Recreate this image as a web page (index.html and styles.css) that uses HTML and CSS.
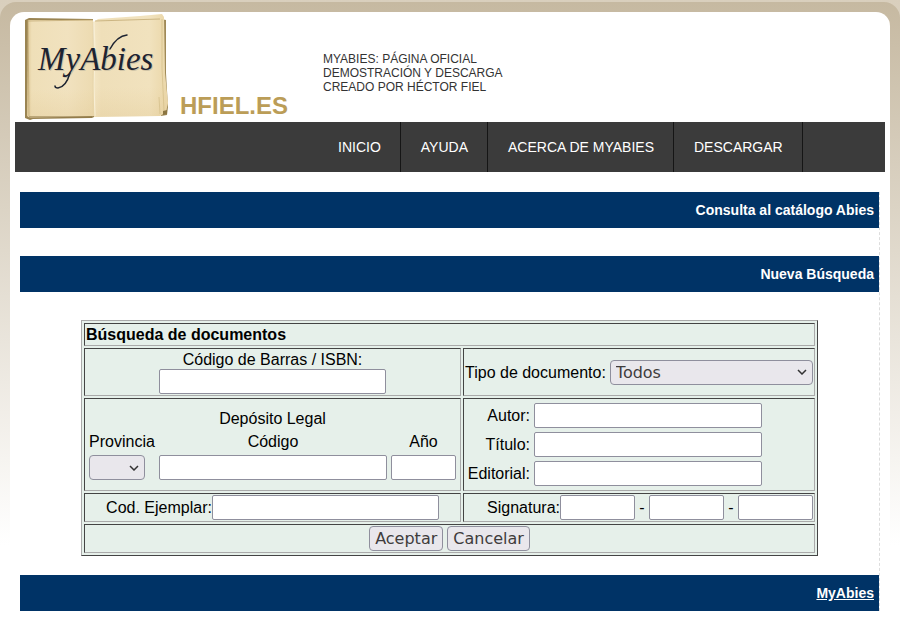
FILE: index.html
```html
<!DOCTYPE html>
<html lang="es">
<head>
<meta charset="utf-8">
<meta name="viewport" content="width=device-width, initial-scale=1">
<title>MyAbies</title>
<link rel="stylesheet" href="styles.css">
</head>
<body>
<div class="frame">
  <div class="page">
    <header class="header">
      <svg class="logo" viewBox="0 0 146 108" role="img" aria-label="MyAbies">
        <defs>
          <linearGradient id="paper-left" x1="0" x2="1" y1="0" y2="0">
            <stop offset="0" stop-color="#dcc694"/>
            <stop offset="0.07" stop-color="#efdfb8"/>
            <stop offset="0.6" stop-color="#f1e2bf"/>
            <stop offset="1" stop-color="#ecdab0"/>
          </linearGradient>
          <linearGradient id="paper-right" x1="0" x2="1" y1="0" y2="0">
            <stop offset="0" stop-color="#f3e5c3"/>
            <stop offset="0.1" stop-color="#efdfb9"/>
            <stop offset="0.75" stop-color="#f1e2be"/>
            <stop offset="1" stop-color="#ead6a7"/>
          </linearGradient>
          <linearGradient id="foot" x1="0" x2="0" y1="0" y2="1">
            <stop offset="0.7" stop-color="#e2c78d" stop-opacity="0"/>
            <stop offset="1" stop-color="#dcc088" stop-opacity="0.25"/>
          </linearGradient>
        </defs>
        <path d="M1 8 L5 6 L69 7 L70 105 L68 106 L9 107 L6 108 L1 106 Z" fill="#9a8452"/>
        <path d="M137 7 L142 8 L142 61 L144 95 L143 103 L137 104 Z" fill="#a08a58"/>
        <path d="M70 10 L74 7 L116 4 L138 2 L140 5 L141 61 L144 91 L142 100 L136 104 L70 105 Z" fill="url(#paper-right)"/>
        <path d="M4 8 L69 8 L71 104 L6 106 L3 104 Z" fill="url(#paper-left)"/>
        <path d="M4 8 L69 8 L71 104 L6 106 Z" fill="url(#foot)"/>
        <path d="M70 10 L138 3 L143 100 L136 104 L70 105 Z" fill="url(#foot)"/>
        <path d="M70 9 L71 39 L70 73 L71 104" fill="none" stroke="#f8eed4" stroke-width="1.2"/>
        <path d="M69 10 L69 41 L69 103" fill="none" stroke="#e6d4a8" stroke-width="0.8"/>
        <path d="M4 8 L5 104 M4 9 L69 8 M71 9 L136 7" fill="none" stroke="#c2aa74" stroke-width="0.8"/>
        <path d="M138 7 L138 56 L140 99 M135 85 L136 102" fill="none" stroke="#d6c08c" stroke-width="0.8"/>
        <path d="M5 105 L68 105" stroke="#8b7444" stroke-width="1"/>
        <path d="M139 99 L143 98 L143 102 L139 103 Z" fill="#8a7441"/>
        <text class="logo-shadow" x="15" y="59">MyAbies</text>
        <text class="logo-text" x="14" y="58">MyAbies</text>
        <path class="swash" d="M46 61 Q42 75 34 76 Q31 76 31 74"/>
        <path class="swash" d="M86 37 Q93 24 103 23"/>
      </svg>
      <div class="site">HFIEL.ES</div>
      <p class="tagline">MYABIES: PÁGINA OFICIAL<br>DEMOSTRACIÓN Y DESCARGA<br>CREADO POR HÉCTOR FIEL</p>
    </header>
    <nav class="nav">
      <a href="#">INICIO</a>
      <a href="#">AYUDA</a>
      <a href="#">ACERCA DE MYABIES</a>
      <a href="#">DESCARGAR</a>
    </nav>
    <main class="content">
      <h1 class="bar">Consulta al catálogo Abies</h1>
      <h2 class="bar">Nueva Búsqueda</h2>
      <form class="search">
        <h3 class="cell wide title">Búsqueda de documentos</h3>

        <div class="cell barcode">
          <label for="isbn">Código de Barras / ISBN:</label>
          <input class="field" id="isbn" type="text">
        </div>
        <div class="cell doctype">
          <label for="tipo">Tipo de documento:</label>
          <span class="select">
            <select id="tipo"><option>Todos</option></select>
            <svg viewBox="0 0 10 6"><path d="M1 1 L5 5 L9 1"/></svg>
          </span>
        </div>

        <div class="cell middle">
          <div class="deposit">
            <span class="deposit-title">Depósito Legal</span>
            <label for="provincia">Provincia</label>
            <label for="codigo">Código</label>
            <label for="anio">Año</label>
            <span class="select small">
              <select id="provincia"><option></option></select>
              <svg viewBox="0 0 10 6"><path d="M1 1 L5 5 L9 1"/></svg>
            </span>
            <input class="field" id="codigo" type="text">
            <input class="field" id="anio" type="text">
          </div>
        </div>
        <div class="cell names">
          <label for="autor">Autor:</label>
          <input class="field" id="autor" type="text">
          <label for="titulo">Título:</label>
          <input class="field" id="titulo" type="text">
          <label for="editorial">Editorial:</label>
          <input class="field" id="editorial" type="text">
        </div>

        <div class="cell middle">
          <label for="ejemplar">Cod. Ejemplar:</label>
          <input class="field" id="ejemplar" type="text">
        </div>
        <div class="cell signature">
          <label for="sig1">Signatura:</label>
          <input class="field short" id="sig1" type="text">
          <span class="dash">-</span>
          <input class="field short" type="text" aria-label="Signatura, segunda parte">
          <span class="dash">-</span>
          <input class="field short" type="text" aria-label="Signatura, tercera parte">
        </div>

        <div class="cell wide actions">
          <button type="submit">Aceptar</button>
          <button type="reset">Cancelar</button>
        </div>
      </form>
      <div class="bar"><a href="#">MyAbies</a></div>
    </main>
  </div>
</div>
</body>
</html>
```
FILE: styles.css
```css
* {
  box-sizing: border-box;
}

body {
  margin: 0;
  padding-top: 2px;
  background: #fff linear-gradient(#d9cfbd, #fff 545px) no-repeat;
  font-family: "Liberation Sans", Arial, sans-serif;
  font-size: 16px;
  line-height: 19px;
  color: #000;
}

.frame {
  padding: 10px 10px 0;
  border-radius: 16px 16px 0 0;
  background: linear-gradient(#c6b9a1, #fff 543px);
}

.page {
  padding: 0 5px 22px;
  border-radius: 14px 14px 0 0;
  background: #fff;
}

.header {
  display: flex;
  align-items: flex-end;
  height: 110px;
  padding-left: 9px;
}

.logo {
  width: 146px;
  height: 108px;
  margin-bottom: 2px;
}

.logo text {
  font-family: "Liberation Serif", serif;
  font-style: italic;
  font-size: 33px;
}

.logo-text {
  fill: #1d2331;
}

.logo-shadow {
  fill: #d0c4a6;
}

.swash {
  fill: none;
  stroke: #1d2331;
  stroke-width: 1.5;
  stroke-linecap: round;
}

.site {
  width: 153px;
  padding: 0 0 2px 10px;
  font-size: 24px;
  font-weight: bold;
  line-height: 28px;
  color: #bb9d57;
}

.tagline {
  margin: 0 0 28px;
  font-size: 12px;
  line-height: 14px;
  color: #333;
}

.nav {
  display: flex;
  height: 50px;
  padding-left: 303px;
  background: #3b3b3b;
}

.nav a {
  padding: 0 19px 0 20px;
  border-right: 1px solid #151515;
  font-size: 14px;
  line-height: 50px;
  color: #fff;
  text-decoration: none;
  white-space: nowrap;
}

.content {
  margin: 20px 5px 0;
  border-right: 1px dashed #ddd;
}

.bar {
  margin: 0 0 28px;
  padding: 0 5px;
  background: #003366;
  font-size: 14px;
  font-weight: bold;
  line-height: 36px;
  text-align: right;
  color: #fff;
}

.bar:last-child {
  margin-bottom: 0;
}

.bar a {
  color: inherit;
}

.search {
  display: grid;
  grid-template-columns: 377fr 352fr;
  gap: 2px;
  max-width: 737px;
  margin: 0 auto 19px;
  padding: 2px;
  border: 1px solid;
  border-color: #aaa #444 #444 #aaa;
  background: #e6f0ea;
}

.cell {
  display: flex;
  align-items: center;
  padding: 1px;
  border: 1px solid;
  border-color: #444 #aaa #aaa #444;
}

.wide {
  grid-column: 1 / -1;
}

.title {
  margin: 0;
  font-size: 16px;
}

.barcode {
  flex-direction: column;
}

.doctype {
  gap: 4px;
}

.middle,
.actions {
  justify-content: center;
}

.field {
  width: 227px;
  height: 25px;
  margin: 0;
  padding: 1px 3px;
  border: 1px solid #8f8f9d;
  border-radius: 2px;
  background: #fff;
  font: 16px "DejaVu Sans", sans-serif;
}

.short {
  width: 75px;
}

.select {
  display: grid;
  flex: 1;
  align-items: center;
}

.select select,
.select svg {
  grid-area: 1 / 1;
}

.select select {
  width: 100%;
  height: 25px;
  margin: 0;
  padding: 0 5px;
  appearance: none;
  border: 1px solid #8f8f9d;
  border-radius: 4px;
  background: #e9e7ec;
  font: 16px "DejaVu Sans", sans-serif;
  color: #403c3c;
}

.select svg {
  justify-self: end;
  width: 10px;
  height: 6px;
  margin-right: 6px;
  fill: none;
  stroke: #333;
  stroke-width: 1.5;
  pointer-events: none;
}

.small {
  width: 56px;
}

.deposit {
  display: grid;
  grid-template-columns: 66px 228px 65px;
  gap: 4px;
  text-align: center;
}

.deposit-title {
  grid-column: 1 / -1;
}

.deposit .field {
  width: 100%;
}

.names {
  display: grid;
  grid-template-columns: 65px 228px;
  gap: 4px;
  padding: 4px 1px;
  text-align: right;
}

.names .field {
  width: 100%;
}

.signature {
  justify-content: flex-end;
}

.dash {
  width: 14px;
  text-align: center;
}

.actions {
  gap: 4px;
}

.actions button {
  height: 25px;
  margin: 0;
  padding: 0 5px;
  border: 1px solid #8f8f9d;
  border-radius: 4px;
  background: #e9e7ec;
  font: 16px "DejaVu Sans", sans-serif;
  color: #403c3c;
}
```
